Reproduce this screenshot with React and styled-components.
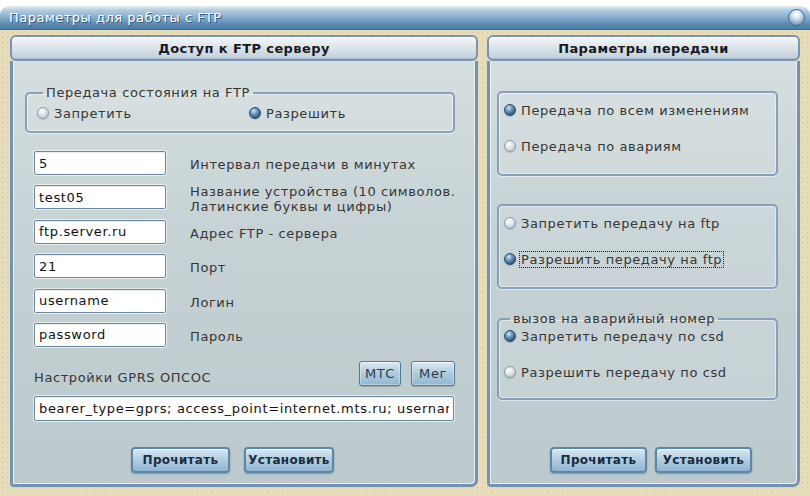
import React from 'react'
import styled, { createGlobalStyle } from 'styled-components'

const GlobalStyle = createGlobalStyle`
  html, body {
    margin: 0;
    padding: 0;
    background: #fff;
  }
  body {
    font-family: "DejaVu Sans", Verdana, sans-serif;
  }
  * {
    box-sizing: border-box;
  }
`

const settings = [
  { value: '5', label: ['Интервал передачи в минутах'] },
  { value: 'test05', label: ['Название устройства (10 символов.', 'Латинские буквы и цифры)'] },
  { value: 'ftp.server.ru', label: ['Адрес FTP - сервера'] },
  { value: '21', label: ['Порт'] },
  { value: 'username', label: ['Логин'] },
  { value: 'password', label: ['Пароль'] },
]

function Radio({ checked, focused, children }) {
  return (
    <RadioRow>
      <RadioDot checked={checked} />
      <RadioText focused={focused}>{children}</RadioText>
    </RadioRow>
  )
}

function App() {
  return (
    <>
      <GlobalStyle />
      <Window>
        <TitleBar>
          <Title>Параметры для работы с FTP</Title>
          <CloseDot />
        </TitleBar>

        <Frame>
          <Panel width={468}>
            <PanelHeader>Доступ к FTP серверу</PanelHeader>
            <LeftBody>
              <GroupBox pad="3px 0 9px 10px">
                <Legend>Передача состояния на FTP</Legend>
                <InlineRadios>
                  <RadioSlot>
                    <Radio>Запретить</Radio>
                  </RadioSlot>
                  <Radio checked>Разрешить</Radio>
                </InlineRadios>
              </GroupBox>

              <FieldGrid>
                {settings.map((s) => (
                  <React.Fragment key={s.value}>
                    <TextInput defaultValue={s.value} />
                    <FieldLabel>
                      {s.label.map((line) => (
                        <div key={line}>{line}</div>
                      ))}
                    </FieldLabel>
                  </React.Fragment>
                ))}
              </FieldGrid>

              <GprsRow>
                <GprsTitle>Настройки GPRS ОПСОС</GprsTitle>
                <OperatorButtons>
                  <SmallButton w={42}>МТС</SmallButton>
                  <SmallButton w={44}>Мег</SmallButton>
                </OperatorButtons>
              </GprsRow>
              <WideInput defaultValue="bearer_type=gprs; access_point=internet.mts.ru; username=mts; password=mts" />

              <ButtonRow indent={106} gap={14}>
                <ActionButton w={99}>Прочитать</ActionButton>
                <ActionButton w={90}>Установить</ActionButton>
              </ButtonRow>
            </LeftBody>
          </Panel>

          <Panel width={313}>
            <PanelHeader>Параметры передачи</PanelHeader>
            <RightBody>
              <GroupBox pad="8px 0 19px 5px">
                <RadioStack>
                  <Radio checked>Передача по всем изменениям</Radio>
                  <Radio>Передача по авариям</Radio>
                </RadioStack>
              </GroupBox>

              <GroupBox pad="8px 0 19px 5px" top={28}>
                <RadioStack>
                  <Radio>Запретить передачу на ftp</Radio>
                  <Radio checked focused>Разрешить передачу на ftp</Radio>
                </RadioStack>
              </GroupBox>

              <GroupBox pad="0 0 17px 5px" top={22}>
                <Legend>вызов на аварийный номер</Legend>
                <RadioStack>
                  <Radio checked>Запретить передачу по csd</Radio>
                  <Radio>Разрешить передачу по csd</Radio>
                </RadioStack>
              </GroupBox>

              <ButtonRow indent={53} gap={8}>
                <ActionButton w={97}>Прочитать</ActionButton>
                <ActionButton w={97}>Установить</ActionButton>
              </ButtonRow>
            </RightBody>
          </Panel>
        </Frame>
      </Window>
    </>
  )
}

const Window = styled.div`
  width: 810px;
  height: 496px;
  padding-top: 6px;
  display: flex;
  flex-direction: column;
  overflow: hidden;
`

const TitleBar = styled.div`
  height: 24px;
  flex: none;
  display: flex;
  align-items: center;
  justify-content: space-between;
  padding: 0 5px 0 9px;
  border-radius: 9px 9px 0 0;
  border-bottom: 1px solid #3d6a93;
  background: linear-gradient(#e6eef4 0%, #b3cde0 18%, #86acca 50%, #5a88b0 80%, #4b7aa3 100%);
`

const Title = styled.span`
  color: #fff;
  font-size: 13px;
  letter-spacing: 0.5px;
  text-shadow: 1px 1px 0 #34597c;
`

const CloseDot = styled.span`
  width: 17px;
  height: 17px;
  border-radius: 50%;
  border: 1px solid #3f6a90;
  background: radial-gradient(circle at 50% 30%, #ffffff 0, #d8e8f3 30%, #86adcd 70%, #5581a8 100%);
`

const Frame = styled.div`
  flex: 1;
  display: flex;
  gap: 9px;
  padding: 5px 10px 9px 10px;
  background-color: #e7dcba;
  background-image:
    radial-gradient(rgba(170, 150, 100, 0.35) 0.8px, transparent 1px),
    radial-gradient(rgba(255, 255, 245, 0.6) 0.8px, transparent 1px);
  background-size: 5px 5px, 7px 7px;
  background-position: 0 0, 2px 3px;
`

const Panel = styled.div`
  width: ${(p) => p.width}px;
  flex: none;
  display: flex;
  flex-direction: column;
`

const PanelHeader = styled.div`
  height: 26px;
  flex: none;
  display: flex;
  align-items: center;
  justify-content: center;
  border: 2px solid #7896b4;
  border-radius: 6px;
  background: linear-gradient(#f5f8f9 0%, #dce5ea 45%, #c2d0da 100%);
  box-shadow: inset 0 1px 0 #fff, inset 0 -1px 0 #a9bccb;
  font-size: 13px;
  font-weight: bold;
  letter-spacing: 0.4px;
  color: #161a1e;
`

const PanelBody = styled.div`
  flex: 1;
  display: flex;
  flex-direction: column;
  border: 3px solid #7393b4;
  border-top: none;
  border-radius: 0 0 7px 4px;
  background: linear-gradient(#d6dfdf 0%, #c6d2d4 40%, #bccacd 100%);
  box-shadow: inset 1px 0 0 #e9eff2, inset -1px -1px 0 #e9eff2;
  font-size: 13px;
  letter-spacing: 0.6px;
  color: #363636;
`

const LeftBody = styled(PanelBody)`
  padding: 24px 20px 0 12px;
`

const RightBody = styled(PanelBody)`
  padding: 30px 19px 0 7px;
`

const GroupBox = styled.fieldset`
  margin: ${(p) => p.top || 0}px 0 0 0;
  min-width: 0;
  padding: ${(p) => p.pad};
  border: 2px solid #87a1b9;
  border-radius: 5px;
  background: rgba(255, 255, 255, 0.1);
  box-shadow: inset 0 0 0 1px rgba(255, 255, 255, 0.45), 0 1px 0 rgba(255, 255, 255, 0.5);
`

const Legend = styled.legend`
  margin-left: 6px;
  padding: 0 3px;
  line-height: 16px;
`

const InlineRadios = styled.div`
  display: flex;
  align-items: center;
`

const RadioSlot = styled.div`
  width: 212px;
  flex: none;
`

const RadioStack = styled.div`
  display: flex;
  flex-direction: column;
  gap: 18px;
`

const RadioRow = styled.div`
  height: 18px;
  display: flex;
  align-items: center;
  gap: 4px;
`

const RadioDot = styled.span`
  width: 12px;
  height: 12px;
  flex: none;
  border-radius: 50%;
  border: 1px solid ${(p) => (p.checked ? '#294b6e' : '#8a9bab')};
  box-shadow: 0 1px 1px rgba(0, 0, 0, 0.15);
  background: ${(p) =>
    p.checked
      ? 'radial-gradient(circle at 38% 30%, #d4e6f5 0, #6a98c1 35%, #2c5781 75%, #1d4166 100%)'
      : 'radial-gradient(circle at 38% 30%, #ffffff 0, #e1e7ec 40%, #a8b6c2 100%)'};
`

const RadioText = styled.span`
  padding: 0 1px;
  line-height: 15px;
  outline: ${(p) => (p.focused ? '1px dotted #222' : 'none')};
`

const FieldGrid = styled.div`
  display: grid;
  grid-template-columns: 132px 1fr;
  grid-auto-rows: 24px;
  column-gap: 24px;
  row-gap: 10.4px;
  margin-top: 18px;
  padding-left: 9px;
`

const TextInput = styled.input`
  width: 100%;
  height: 24px;
  padding: 0 4px;
  border: 1px solid #6a879f;
  border-radius: 2px;
  background: #fff;
  box-shadow: 0 0 0 1px rgba(255, 255, 255, 0.6), inset 0 1px 1px rgba(0, 0, 0, 0.08);
  font-family: "DejaVu Sans", Verdana, sans-serif;
  font-size: 13px;
  letter-spacing: 0.65px;
  color: #111;
  outline: none;
`

const FieldLabel = styled.div`
  align-self: center;
  padding-top: 3px;
  line-height: 15px;
  white-space: nowrap;
`

const GprsRow = styled.div`
  display: flex;
  align-items: flex-end;
  justify-content: space-between;
  margin-top: 14px;
  padding-left: 9px;
`

const GprsTitle = styled.span`
  line-height: 16px;
`

const OperatorButtons = styled.div`
  display: flex;
  gap: 10px;
`

const SmallButton = styled.button`
  width: ${(p) => p.w}px;
  height: 25px;
  padding: 0;
  border: 1px solid #4f7b9d;
  border-radius: 3px;
  background: linear-gradient(#dbe9f2 0%, #b1cde0 45%, #93b7d2 100%);
  box-shadow: inset 0 1px 0 #f3f8fb, inset 0 0 0 1px rgba(255, 255, 255, 0.35), 0 1px 1px rgba(0, 0, 0, 0.2);
  font-family: "DejaVu Sans", Verdana, sans-serif;
  font-size: 13px;
  letter-spacing: 0.6px;
  color: #2c3d4e;
`

const WideInput = styled(TextInput)`
  width: auto;
  height: 25px;
  margin: 10px 1px 0 9px;
`

const ButtonRow = styled.div`
  display: flex;
  gap: ${(p) => p.gap}px;
  margin-top: auto;
  margin-bottom: 11px;
  padding-left: ${(p) => p.indent}px;
`

const ActionButton = styled.button`
  width: ${(p) => p.w}px;
  height: 26px;
  padding: 0;
  border: 2px solid #5b87ab;
  border-radius: 4px;
  background: linear-gradient(#d9e8f2 0%, #b4d0e3 45%, #8fb5d2 100%);
  box-shadow: inset 0 1px 0 #f1f7fb, 0 1px 2px rgba(0, 0, 0, 0.25);
  font-family: "DejaVu Sans", Verdana, sans-serif;
  font-size: 12px;
  font-weight: bold;
  letter-spacing: 0.3px;
  color: #1b2c3e;
`

export default App
